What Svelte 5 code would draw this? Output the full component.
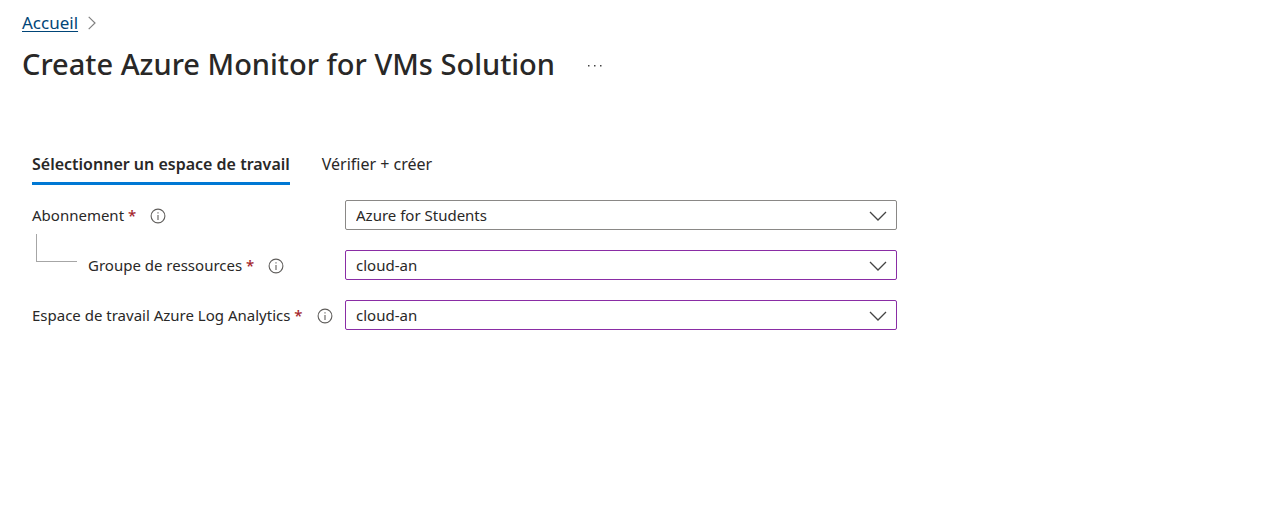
<script>
  const fields = [
    { id: 'subscription', label: 'Abonnement', value: 'Azure for Students', nested: false, edited: false },
    { id: 'group', label: 'Groupe de ressources', value: 'cloud-an', nested: true, edited: true },
    { id: 'workspace', label: 'Espace de travail Azure Log Analytics', value: 'cloud-an', nested: false, edited: true }
  ];
</script>

<div class="page">
  <nav class="crumbs">
    <a href="#home">Accueil</a>
    <svg width="8" height="14" viewBox="0 0 8 14" aria-hidden="true"><path d="M0.7 0.9 L7 7 L0.7 13.1" /></svg>
  </nav>

  <header>
    <h1>Create Azure Monitor for VMs Solution</h1>
    <button class="more" type="button">
      <svg width="16" height="4" viewBox="0 0 16 4" aria-hidden="true">
        <rect x="1" y="1" width="1.5" height="1.5" /><rect x="7" y="1" width="1.5" height="1.5" /><rect x="13" y="1" width="1.5" height="1.5" />
      </svg>
    </button>
  </header>

  <main>
    <div class="tabs" role="tablist">
      <button type="button" role="tab" class="active" aria-selected="true">Sélectionner un espace de travail</button>
      <button type="button" role="tab" aria-selected="false">Vérifier + créer</button>
    </div>

    <form>
      {#each fields as f}
        <div class="row">
          <div class="caption" class:nested={f.nested}>
            {#if f.nested}<span class="branch"></span>{/if}
            <label for={f.id}>{f.label} <span class="star">*</span></label>
            <svg class="info" width="16" height="18" viewBox="0 0 16 18" aria-hidden="true">
              <circle cx="8" cy="10" r="6.9" />
              <path d="M8 9 V14" /><path d="M8 6.2 V7.6" />
            </svg>
          </div>
          <div class="field">
            <select id={f.id} class:edited={f.edited}><option>{f.value}</option></select>
            <svg class="chevron" width="18" height="12" viewBox="0 0 18 12" aria-hidden="true"><path d="M1 3 L9 11 L17 3" /></svg>
          </div>
        </div>
      {/each}
    </form>
  </main>
</div>

<style>
  :global(body) {
    background: #fff;
  }
  .page {
    padding: 12px 22px;
    font-family: 'Segoe UI', 'Noto Sans', sans-serif;
    font-size: 15px;
    line-height: 20px;
    color: #292827;
  }
  svg {
    display: block;
    flex: none;
    fill: none;
  }
  button {
    padding: 0;
    border: 0;
    background: none;
    font: inherit;
    color: inherit;
  }
  .crumbs {
    display: flex;
    align-items: center;
    gap: 10px;
    font-size: 17px;
    line-height: 22px;
  }
  .crumbs a {
    color: #004578;
    text-underline-offset: 2px;
  }
  .crumbs svg {
    stroke: #808080;
    stroke-width: 1.2;
  }
  header {
    display: flex;
    align-items: center;
    gap: 32px;
    margin-top: 10px;
  }
  h1 {
    margin: 0;
    font-size: 29px;
    line-height: 40px;
    font-weight: 500;
  }
  .more {
    padding-top: 3px;
  }
  .more svg {
    fill: #444;
  }
  main {
    padding: 68px 10px 0;
  }
  .tabs {
    display: flex;
    gap: 32px;
    font-size: 16px;
    line-height: 24px;
  }
  .tabs button {
    padding-bottom: 6px;
    border-bottom: 3px solid transparent;
  }
  .tabs .active {
    font-weight: 600;
    border-bottom-color: #0078d4;
  }
  form {
    display: grid;
    gap: 20px;
    max-width: 865px;
    margin-top: 15px;
  }
  .row {
    display: grid;
    grid-template-columns: 313px minmax(0, 1fr);
    align-items: center;
  }
  .caption {
    display: flex;
    align-items: center;
    gap: 14px;
    white-space: nowrap;
  }
  .branch {
    align-self: start;
    width: 40px;
    height: 27px;
    margin: -16px -3px 0 4px;
    border: solid #a6a6a6;
    border-width: 0 0 1px 1px;
  }
  .nested {
    height: 30px;
  }
  .star {
    color: #a4262c;
    font-weight: 500;
  }
  .info {
    stroke: #605e5c;
    stroke-width: 1.1;
  }
  .field {
    display: grid;
    align-items: center;
  }
  .field > :global(*) {
    grid-area: 1 / 1;
  }
  select {
    appearance: none;
    width: 100%;
    height: 30px;
    padding: 0 36px 0 10px;
    border: 1px solid #8a8886;
    border-radius: 2px;
    background: #fff;
    font: inherit;
    color: inherit;
  }
  .edited {
    border-color: #8a2da5;
  }
  .chevron {
    justify-self: end;
    margin-right: 10px;
    stroke: #444;
    stroke-width: 1.3;
    pointer-events: none;
  }
</style>
